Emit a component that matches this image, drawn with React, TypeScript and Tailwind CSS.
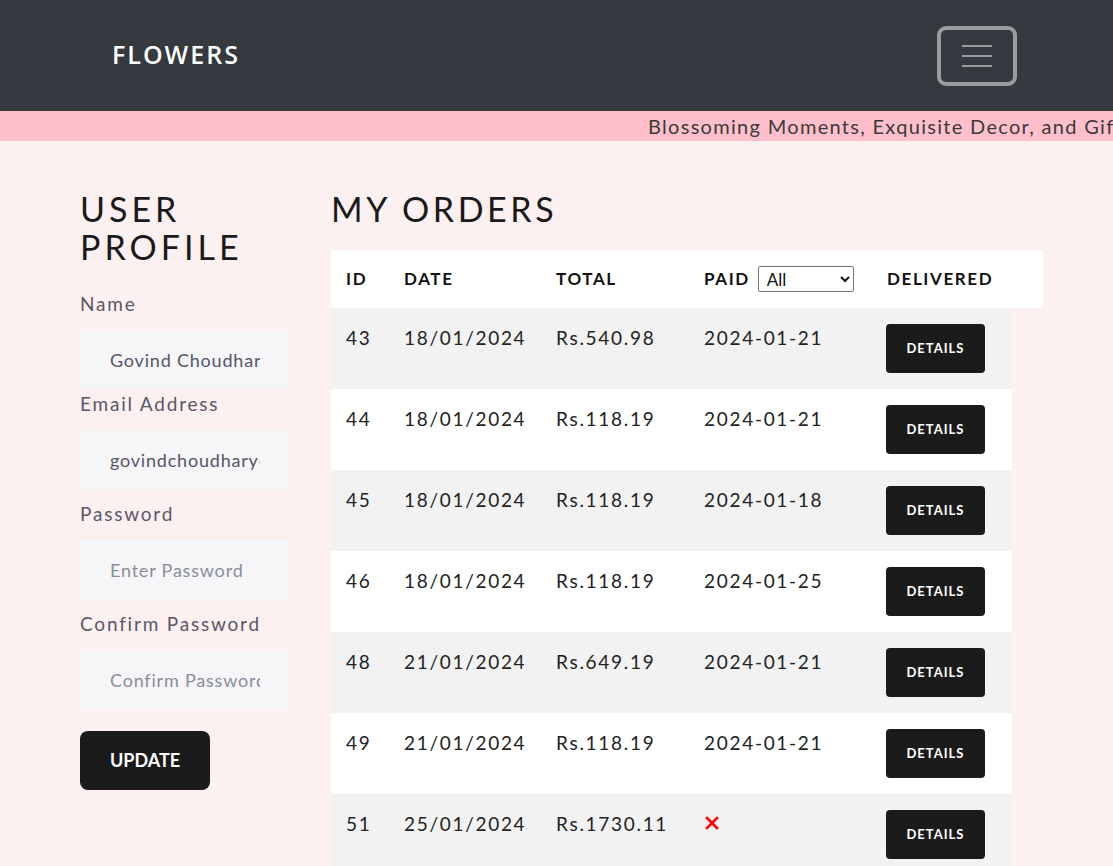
import React from "react";

const orders = [
  { id: "43", date: "18/01/2024", total: "Rs.540.98", paid: "2024-01-21" },
  { id: "44", date: "18/01/2024", total: "Rs.118.19", paid: "2024-01-21" },
  { id: "45", date: "18/01/2024", total: "Rs.118.19", paid: "2024-01-18" },
  { id: "46", date: "18/01/2024", total: "Rs.118.19", paid: "2024-01-25" },
  { id: "48", date: "21/01/2024", total: "Rs.649.19", paid: "2024-01-21" },
  { id: "49", date: "21/01/2024", total: "Rs.118.19", paid: "2024-01-21" },
  { id: "51", date: "25/01/2024", total: "Rs.1730.11", paid: "" },
];

function Field({ label, value, placeholder, type = "text", last = false }: { label: string; value?: string; placeholder?: string; type?: string; last?: boolean }) {
  return (
    <div className={last ? "" : "mb-[9px]"}>
      <label className="block h-[30px] leading-[30px] text-[19px] tracking-[1.8px] text-[#5b5766] mb-[11px]">{label}</label>
      <input
        type={type}
        readOnly
        defaultValue={value}
        placeholder={placeholder}
        className="block w-[210px] h-[60px] bg-[#f6f6f9] pl-[30px] pr-[30px] text-[18px] tracking-[0.8px] text-[#555566] placeholder:text-[#8a8d99] outline-none"
      />
    </div>
  );
}

export default function App() {
  return (
    <div className="min-h-screen bg-[#fcf0f1] font-['Lato',sans-serif] text-[#212529]">
      <nav className="h-[111px] bg-[#343a40] flex items-center justify-between pl-[112px] pr-[96px]">
        <span className="text-white text-[25px] font-semibold tracking-[2px] leading-none -mt-[3px] font-['Open_Sans',sans-serif]">FLOWERS</span>
        <button className="w-[80px] h-[60px] border-[4px] border-[#9a9da0] rounded-[9px] flex flex-col items-center justify-center gap-[8px]">
          <span className="block w-[30px] h-[2px] bg-[#9a9da0]" />
          <span className="block w-[30px] h-[2px] bg-[#9a9da0]" />
          <span className="block w-[30px] h-[2px] bg-[#9a9da0]" />
        </button>
      </nav>
      <div className="h-[30px] bg-[#ffc0cb] overflow-hidden whitespace-nowrap pl-[648px] leading-[30px] text-[20px] tracking-[1.3px] text-[#3a3a3a]">
        Blossoming Moments, Exquisite Decor, and Gifts
      </div>
      <div className="flex pt-[49px] pl-[80px]">
        <div className="w-[210px] mr-[41px]">
          <h2 className="text-[34px] leading-[38px] tracking-[4px] font-normal text-[#1a1a1a] mb-[23px]">USER PROFILE</h2>
          <div>
            <label className="block h-[30px] leading-[30px] text-[19px] tracking-[1.8px] text-[#5b5766] mb-[11px]">Name</label>
            <input readOnly defaultValue="Govind Choudhary" className="block w-[210px] h-[59px] bg-[#f6f6f9] pl-[30px] pr-[30px] text-[18px] tracking-[0.8px] text-[#555566] outline-none" />
          </div>
          <Field label="Email Address" value="govindchoudhary@gmail.com" />
          <Field label="Password" placeholder="Enter Password" type="password" />
          <Field label="Confirm Password" placeholder="Confirm Password" type="password" last />
          <button className="mt-[21px] w-[130px] h-[59px] bg-[#1b1b1b] rounded-[8px] text-white text-[18px] font-bold">UPDATE</button>
        </div>
        <div>
          <h2 className="text-[34px] leading-[38px] tracking-[3.6px] font-normal text-[#1a1a1a] mb-[22px]">MY ORDERS</h2>
          <div className="w-[712px] h-[58px] bg-white flex items-center text-[17px] font-bold tracking-[1.6px] text-[#111]">
            <div className="w-[58px] pl-[15px]">ID</div>
            <div className="w-[152px] pl-[15px]">DATE</div>
            <div className="w-[148px] pl-[15px]">TOTAL</div>
            <div className="w-[183px] pl-[15px] flex items-center gap-[8px]">
              <span>PAID</span>
              <select className="w-[96px] h-[26px] border border-[#767676] rounded-[2px] bg-white text-[17px] font-normal tracking-normal pl-[4px] text-[#111]">
                <option>All</option>
              </select>
            </div>
            <div className="pl-[15px]">DELIVERED</div>
          </div>
          {orders.map((o, i) => (
            <div key={o.id} className={`w-[681px] h-[81px] flex items-start text-[19px] tracking-[1.7px] text-[#222] ${i % 2 === 0 ? "bg-[#f2f2f2]" : "bg-white"}`}>
              <div className="w-[58px] pl-[15px] pt-[18px] leading-[24px]">{o.id}</div>
              <div className="w-[152px] pl-[15px] pt-[18px] leading-[24px]">{o.date}</div>
              <div className="w-[148px] pl-[15px] pt-[18px] leading-[24px]">{o.total}</div>
              <div className="w-[183px] pl-[15px] pt-[18px] leading-[24px]">
                {o.paid ? (
                  o.paid
                ) : (
                  <svg width="14" height="14" viewBox="0 0 14 14" className="ml-[1px] mt-[4px]">
                    <path d="M2 2 L12 12 M12 2 L2 12" stroke="#ff0000" strokeWidth="2.6" strokeLinecap="square" />
                  </svg>
                )}
              </div>
              <div className="pl-[14px] pt-[16px]">
                <button className="w-[99px] h-[49px] bg-[#1b1b1b] rounded-[4px] text-white text-[13px] font-bold tracking-[1px]">DETAILS</button>
              </div>
            </div>
          ))}
        </div>
      </div>
    </div>
  );
}
